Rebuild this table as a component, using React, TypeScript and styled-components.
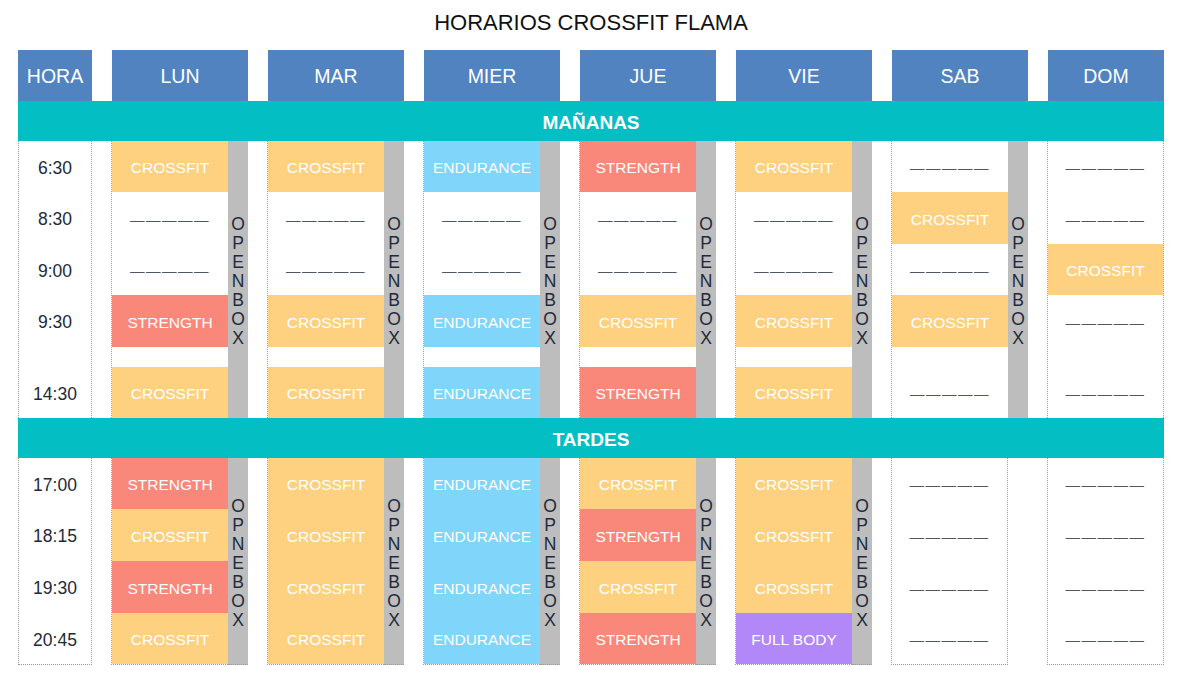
import React from 'react';
import styled, { createGlobalStyle } from 'styled-components';

type Kind = 'c' | 's' | 'e' | 'f' | '-';

const FONT = `'Liberation Sans', Arial, Helvetica, sans-serif`;

const GlobalStyle = createGlobalStyle`
  html, body {
    margin: 0;
    padding: 0;
    background: #fff;
  }
  body {
    font-family: ${FONT};
  }
`;

const COLORS: Record<Kind, string> = {
  c: '#fdd180',
  s: '#f9877a',
  e: '#80d5fb',
  f: '#b288f8',
  '-': 'transparent',
};

const LABELS: Record<Kind, string> = {
  c: 'CROSSFIT',
  s: 'STRENGTH',
  e: 'ENDURANCE',
  f: 'FULL BODY',
  '-': '—————',
};

const Page = styled.div`
  width: 1146px;
  padding: 0 18px 16px;
`;

const Title = styled.h1`
  box-sizing: border-box;
  height: 50px;
  margin: 0;
  padding-top: 9px;
  font: 400 22px/28px ${FONT};
  color: #111;
  text-align: center;
`;

const Columns = styled.div`
  display: grid;
  grid-template-columns: 74px repeat(6, 136px) 116px;
  column-gap: 20px;
`;

const HeaderCell = styled.div`
  box-sizing: border-box;
  display: flex;
  align-items: center;
  justify-content: center;
  height: 51px;
  padding-top: 2px;
  background: #5083bf;
  color: #fff;
  font-size: 19.5px;
`;

const Band = styled.div`
  box-sizing: border-box;
  display: flex;
  align-items: center;
  justify-content: center;
  height: 40px;
  padding-top: 3px;
  background: #03bec3;
  color: #fff;
  font-size: 19px;
  font-weight: 700;
`;

const TimeColumn = styled.div<{ $closed?: boolean }>`
  display: flex;
  flex-direction: column;
  border-left: 1px dotted #9a9a9a;
  border-right: 1px dotted #9a9a9a;
  border-bottom: ${({ $closed }) => ($closed ? '1px dotted #9a9a9a' : 'none')};
`;

const TimeCell = styled.div<{ $h: number }>`
  box-sizing: border-box;
  display: flex;
  align-items: center;
  justify-content: center;
  height: ${({ $h }) => $h}px;
  padding-top: 3px;
  font-size: 17.5px;
  color: #1d2a3a;
`;

const Spacer = styled.div`
  height: 20px;
  flex-shrink: 0;
`;

const DayColumn = styled.div`
  display: flex;
  align-items: stretch;
`;

const Slots = styled.div<{ $closed?: boolean; $open: boolean }>`
  display: flex;
  flex-direction: column;
  width: ${({ $open }) => ($open ? 116 : 115)}px;
  margin-left: -1px;
  border-left: 1px dotted #9a9a9a;
  border-right: ${({ $open }) => ($open ? 'none' : '1px dotted #9a9a9a')};
  border-bottom: ${({ $closed }) => ($closed ? '1px dotted #9a9a9a' : 'none')};
`;

const Slot = styled.div<{ $kind: Kind; $h: number }>`
  box-sizing: border-box;
  display: flex;
  align-items: center;
  justify-content: center;
  height: ${({ $h }) => $h}px;
  padding-top: 3px;
  flex-shrink: 0;
  background: ${({ $kind }) => COLORS[$kind]};
  color: ${({ $kind }) => ($kind === '-' ? '#4f5667' : '#fff')};
  font-size: ${({ $kind }) => ($kind === '-' ? '14.5px' : '15.5px')};
  letter-spacing: ${({ $kind }) => ($kind === '-' ? '1.5px' : '0')};
  white-space: nowrap;
`;

const OpenBox = styled.div<{ $closed?: boolean }>`
  box-sizing: border-box;
  display: flex;
  flex-direction: column;
  align-items: center;
  justify-content: center;
  width: 20px;
  padding-top: 4px;
  background: #bdbdbd;
  border-bottom: ${({ $closed }) => ($closed ? '1px dotted #9a9a9a' : 'none')};
  color: #1e2b3c;
  font-size: 17.5px;
  line-height: 19px;

  span {
    display: block;
  }
`;

type Day = {
  name: string;
  morning: Kind[];
  evening: Kind[];
  openMorning: boolean;
  openEvening: boolean;
};

const DAYS: Day[] = [
  { name: 'LUN', morning: ['c', '-', '-', 's', 'c'], evening: ['s', 'c', 's', 'c'], openMorning: true, openEvening: true },
  { name: 'MAR', morning: ['c', '-', '-', 'c', 'c'], evening: ['c', 'c', 'c', 'c'], openMorning: true, openEvening: true },
  { name: 'MIER', morning: ['e', '-', '-', 'e', 'e'], evening: ['e', 'e', 'e', 'e'], openMorning: true, openEvening: true },
  { name: 'JUE', morning: ['s', '-', '-', 'c', 's'], evening: ['c', 's', 'c', 's'], openMorning: true, openEvening: true },
  { name: 'VIE', morning: ['c', '-', '-', 'c', 'c'], evening: ['c', 'c', 'c', 'f'], openMorning: true, openEvening: true },
  { name: 'SAB', morning: ['-', 'c', '-', 'c', '-'], evening: ['-', '-', '-', '-'], openMorning: true, openEvening: false },
  { name: 'DOM', morning: ['-', '-', 'c', '-', '-'], evening: ['-', '-', '-', '-'], openMorning: false, openEvening: false },
];

const MORNING_TIMES = ['6:30', '8:30', '9:00', '9:30', '14:30'];
const MORNING_HEIGHTS = [51, 52, 51, 52, 51];
const EVENING_TIMES = ['17:00', '18:15', '19:30', '20:45'];
const EVENING_HEIGHTS = [51, 52, 52, 51];
const SPACER_AFTER = 3;

const Vertical = ({ text, closed }: { text: string; closed?: boolean }) => (
  <OpenBox $closed={closed}>
    {text.split('').map((l, i) => (
      <span key={i}>{l}</span>
    ))}
  </OpenBox>
);

const Section = ({
  times,
  heights,
  evening,
}: {
  times: string[];
  heights: number[];
  evening?: boolean;
}) => (
  <Columns>
    <TimeColumn $closed={evening}>
      {times.map((t, i) => (
        <React.Fragment key={t}>
          <TimeCell $h={heights[i]}>{t}</TimeCell>
          {!evening && i === SPACER_AFTER && <Spacer />}
        </React.Fragment>
      ))}
    </TimeColumn>
    {DAYS.map((day) => {
      const slots = evening ? day.evening : day.morning;
      const open = evening ? day.openEvening : day.openMorning;
      return (
        <DayColumn key={day.name}>
          <Slots $closed={evening} $open={open}>
            {slots.map((k, i) => (
              <React.Fragment key={i}>
                <Slot $kind={k} $h={heights[i]}>
                  {LABELS[k]}
                </Slot>
                {!evening && i === SPACER_AFTER && <Spacer />}
              </React.Fragment>
            ))}
          </Slots>
          {open && <Vertical text={evening ? 'OPNEBOX' : 'OPENBOX'} closed={evening} />}
        </DayColumn>
      );
    })}
  </Columns>
);

export default function App() {
  return (
    <>
      <GlobalStyle />
      <Page>
        <Title>HORARIOS CROSSFIT FLAMA</Title>
        <Columns>
          <HeaderCell>HORA</HeaderCell>
          {DAYS.map((d) => (
            <HeaderCell key={d.name}>{d.name}</HeaderCell>
          ))}
        </Columns>
        <Band>MAÑANAS</Band>
        <Section times={MORNING_TIMES} heights={MORNING_HEIGHTS} />
        <Band>TARDES</Band>
        <Section times={EVENING_TIMES} heights={EVENING_HEIGHTS} evening />
      </Page>
    </>
  );
}
